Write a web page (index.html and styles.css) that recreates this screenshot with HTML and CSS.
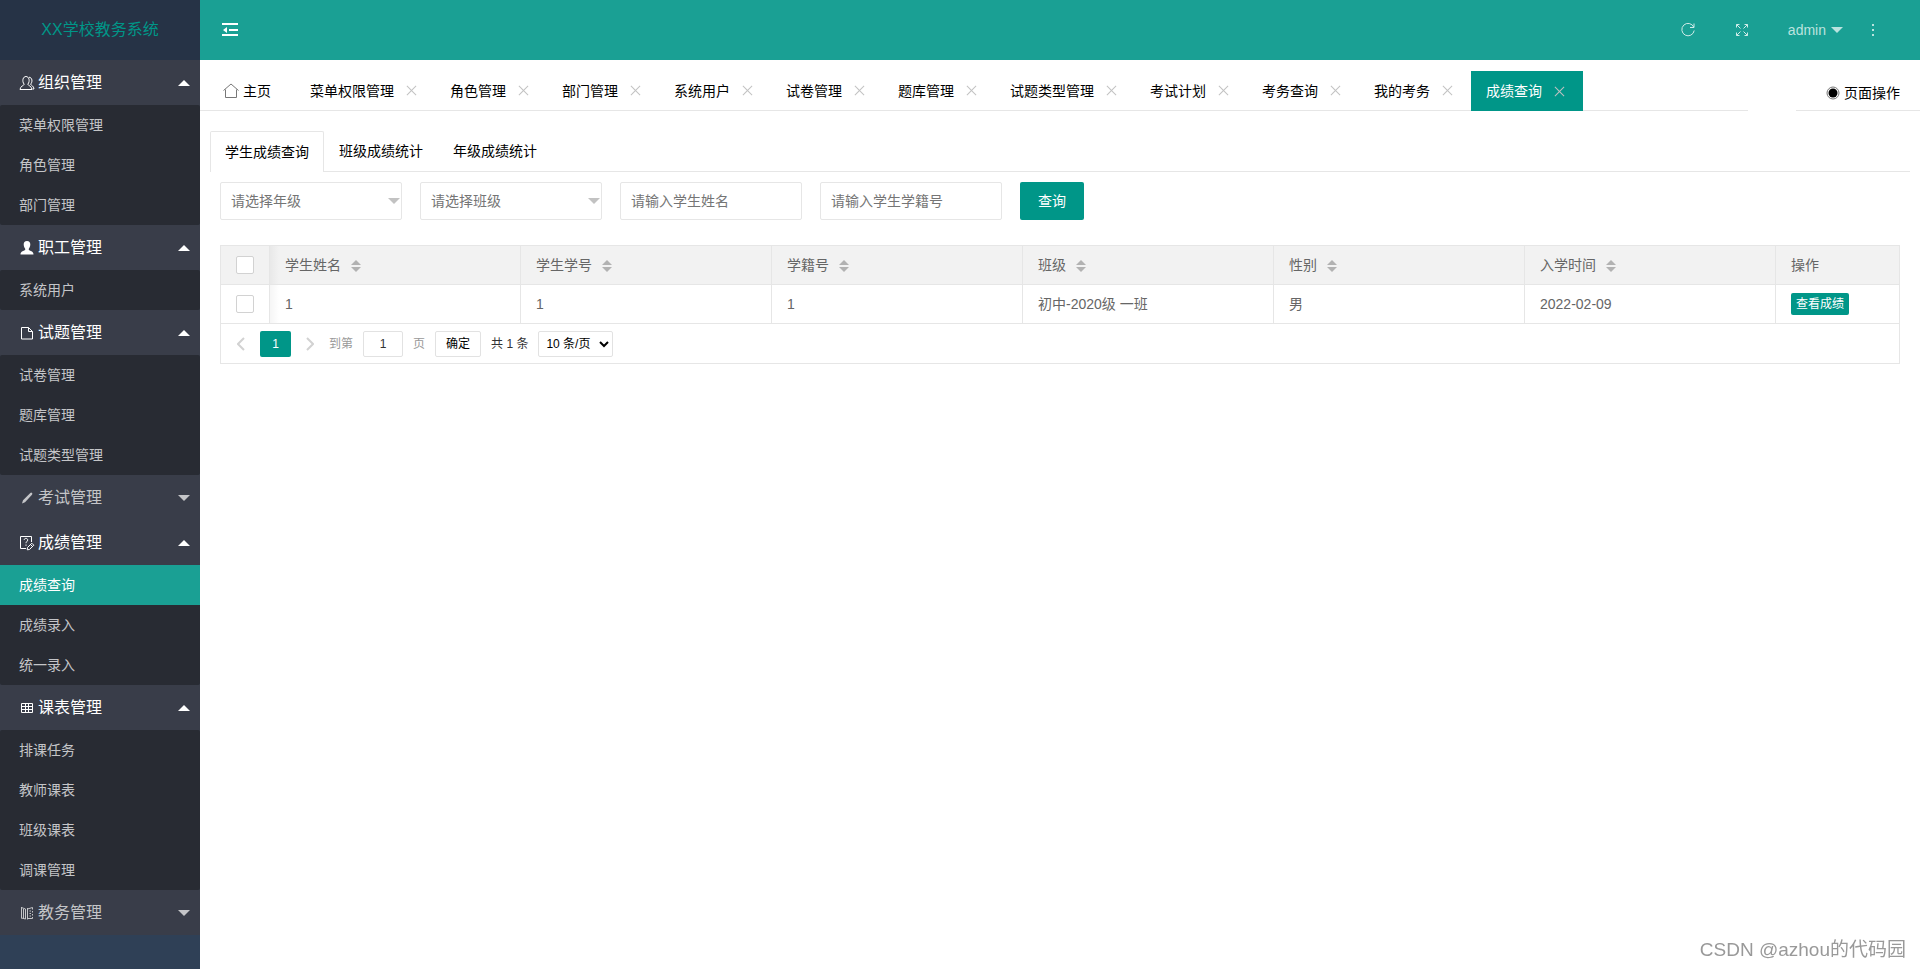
FILE: index.html
```html
<!DOCTYPE html>
<html lang="zh-CN">
<head>
<meta charset="utf-8">
<title>XX学校教务系统</title>
<link rel="stylesheet" href="styles.css">
</head>
<body>
<div class="app">
  <aside class="sidebar">
    <div class="logo">XX学校教务系统</div>
    <nav class="menu">
      <section class="group open">
        <button class="group-title" type="button"><svg class="icon" viewBox="0 0 16 16"><path d="M5.2 9.2C3.8 7.800 3.700 5.500 4 4.200 4.400 2.400 5.700 1.500 7 1.500s2.600.9 3 2.700c.3 1.300.2 3.600-1.200 5 .3 1.700 3.900 1.600 4.200 5.300H1c.3-3.700 3.900-3.600 4.200-5.300zM10 2.200c1.800.1 2.700 1.500 2.900 2.800.2 1.600-.2 2.900-1.300 4.200.4 1.300 3.200 1.600 3.400 4.800h-1.500"/></svg>组织管理<i class="caret"></i></button>
        <div class="items"><a href="#">菜单权限管理</a><a href="#">角色管理</a><a href="#">部门管理</a></div>
      </section>
      <section class="group open">
        <button class="group-title" type="button"><svg class="icon solid" viewBox="0 0 16 16"><path d="M8 1c2.300 0 3.400 1.600 3.300 3.500-.1 2-.8 3.500-1.500 4.300v1.300c1 .9 4.700 1.200 4.700 4.400h-13c0-3.200 3.700-3.500 4.700-4.400V8.800C5.500 8 4.800 6.500 4.700 4.500 4.600 2.600 5.700 1 8 1z"/></svg>职工管理<i class="caret"></i></button>
        <div class="items"><a href="#">系统用户</a></div>
      </section>
      <section class="group open">
        <button class="group-title" type="button"><svg class="icon" viewBox="0 0 16 16"><path d="M2.500 2.500h7l4 4v7.500h-11zM9.500 2.500v4h4"/></svg>试题管理<i class="caret"></i></button>
        <div class="items"><a href="#">试卷管理</a><a href="#">题库管理</a><a href="#">试题类型管理</a></div>
      </section>
      <section class="group">
        <button class="group-title" type="button"><svg class="icon solid" viewBox="0 0 16 16"><path d="M3 13.500l1-3.300L11.300 3q1-.8 1.700 0 .8.800 0 1.700L6 12.300z"/></svg>考试管理<i class="caret"></i></button>
      </section>
      <section class="group open">
        <button class="group-title" type="button"><svg class="icon" viewBox="0 0 16 16"><path d="M7 13.500H1.500v-12h11V7M5.200 5c0-2.200 3.500-2.200 3.500 0C8.700 6.500 7 6.500 7 8.200M7 9.500v1.300M8.500 12.500l4.300-4.300 2 2-4.300 4.300-2.300.3zM11.500 9.500l2 2"/></svg>成绩管理<i class="caret"></i></button>
        <div class="items"><a href="#" class="current">成绩查询</a><a href="#">成绩录入</a><a href="#">统一录入</a></div>
      </section>
      <section class="group open">
        <button class="group-title" type="button"><svg class="icon" viewBox="0 0 16 16"><path d="M2.500 3.500h11v9h-11zM2.500 6.500h11M2.500 9.500h11M6.500 3.500v9M9.500 3.500v9"/></svg>课表管理<i class="caret"></i></button>
        <div class="items"><a href="#">排课任务</a><a href="#">教师课表</a><a href="#">班级课表</a><a href="#">调课管理</a></div>
      </section>
      <section class="group">
        <button class="group-title" type="button"><svg class="icon" viewBox="0 0 16 16"><path d="M2.500 2v11.500M2.500 2.500l4 1.500v10l-4-1M4.500 4v9M8.500 3v11.500M8.500 4l5-1.500M8.500 13.500h5M13.500 2.500v2M13.500 6v1.500M13.500 9v1.500M13.500 12v1.500M10.500 6h1.500M10.500 8.500h1.500M10.500 11h1.500"/></svg>教务管理<i class="caret"></i></button>
      </section>
    </nav>
  </aside>

  <div class="main">
    <header class="topbar">
      <button class="bare" type="button" aria-label="收起菜单"><svg class="fold" viewBox="0 0 16 16"><path d="M0 1h16v2H0zM7 7h9v2H7zM0 12h16v2H0zM5 5v6L1 8z"/></svg></button>
      <div class="tools">
        <button class="bare" type="button" aria-label="刷新"><svg class="icon bold" viewBox="0 0 16 16"><path d="M13.700 5A6.200 6.200 0 1 0 14.200 8.500M14 1.500v4h-4"/></svg></button>
        <button class="bare" type="button" aria-label="全屏"><svg class="icon bold" viewBox="0 0 16 16"><path d="M2.500 5.500v-3h3M2.500 2.500l4 4M10.500 2.500h3v3M13.500 2.500l-4 4M2.500 10.500v3h3M2.500 13.500l4-4M10.500 13.500h3v-3M13.500 13.500l-4-4"/></svg></button>
        <div class="user">
          <button class="bare account" type="button">admin<i class="caret"></i></button>
          <button class="bare" type="button" aria-label="更多"><svg class="icon solid" viewBox="0 0 16 16"><path d="M7 2h2v2H7zM7 7h2v2H7zM7 12h2v2H7z"/></svg></button>
        </div>
      </div>
    </header>

    <div class="tabbar">
      <div class="tabs">
        <div class="tab home"><svg class="icon" viewBox="0 0 16 16"><path d="M.5 7.500L8 1l7.500 6.500M2.500 6.500v8h11v-8"/></svg>主页</div>
        <div class="tab">菜单权限管理<button class="close" type="button" aria-label="关闭"></button></div>
        <div class="tab">角色管理<button class="close" type="button" aria-label="关闭"></button></div>
        <div class="tab">部门管理<button class="close" type="button" aria-label="关闭"></button></div>
        <div class="tab">系统用户<button class="close" type="button" aria-label="关闭"></button></div>
        <div class="tab">试卷管理<button class="close" type="button" aria-label="关闭"></button></div>
        <div class="tab">题库管理<button class="close" type="button" aria-label="关闭"></button></div>
        <div class="tab">试题类型管理<button class="close" type="button" aria-label="关闭"></button></div>
        <div class="tab">考试计划<button class="close" type="button" aria-label="关闭"></button></div>
        <div class="tab">考务查询<button class="close" type="button" aria-label="关闭"></button></div>
        <div class="tab">我的考务<button class="close" type="button" aria-label="关闭"></button></div>
        <div class="tab active">成绩查询<button class="close" type="button" aria-label="关闭"></button></div>
      </div>
      <button class="page-ops" type="button"><svg class="dot" viewBox="0 0 14 14"><circle class="ring" cx="7" cy="7" r="6"/><circle cx="7" cy="7" r="4.500"/></svg>页面操作</button>
    </div>

    <main class="content">
      <div class="subtabs">
        <button class="subtab active" type="button">学生成绩查询</button>
        <button class="subtab" type="button">班级成绩统计</button>
        <button class="subtab" type="button">年级成绩统计</button>
      </div>
      <div class="panel">
        <form class="filters">
          <div class="pick"><select class="field" aria-label="年级"><option>请选择年级</option></select></div>
          <div class="pick"><select class="field" aria-label="班级"><option>请选择班级</option></select></div>
          <input class="field" type="text" aria-label="学生姓名" placeholder="请输入学生姓名">
          <input class="field" type="text" aria-label="学生学籍号" placeholder="请输入学生学籍号">
          <button class="search" type="button">查询</button>
        </form>
        <div class="grid">
          <table>
            <colgroup><col class="c-check"><col><col><col><col><col><col><col class="c-ops"></colgroup>
            <thead>
              <tr>
                <th class="check"><input type="checkbox" aria-label="全选"></th>
                <th>学生姓名<i class="sort"></i></th>
                <th>学生学号<i class="sort"></i></th>
                <th>学籍号<i class="sort"></i></th>
                <th>班级<i class="sort"></i></th>
                <th>性别<i class="sort"></i></th>
                <th>入学时间<i class="sort"></i></th>
                <th>操作</th>
              </tr>
            </thead>
            <tbody>
              <tr>
                <td class="check"><input type="checkbox" aria-label="选择"></td>
                <td>1</td><td>1</td><td>1</td><td>初中-2020级 一班</td><td>男</td><td>2022-02-09</td>
                <td><button class="view" type="button">查看成绩</button></td>
              </tr>
            </tbody>
          </table>
          <div class="pager">
            <button class="arrow" type="button" aria-label="上一页"><svg viewBox="0 0 8 14"><path d="M7 1L1 7l6 6"/></svg></button>
            <span class="page">1</span>
            <button class="arrow" type="button" aria-label="下一页"><svg viewBox="0 0 8 14"><path d="M1 1l6 6-6 6"/></svg></button>
            <label class="jump">到第<input type="text" value="1">页</label>
            <button class="ok" type="button">确定</button>
            <span class="total">共 1 条</span>
            <select class="size" aria-label="每页条数"><option>10 条/页</option></select>
          </div>
        </div>
      </div>
    </main>
  </div>
</div>
<div class="watermark">CSDN @azhou的代码园</div>
</body>
</html>
```
FILE: styles.css
```css
* { box-sizing: border-box; }

body {
  margin: 0;
  background: #fff;
  color: #000;
  font: 14px/24px "Liberation Sans", "Noto Sans CJK SC", sans-serif;
}

button, input, select { font: inherit; color: inherit; margin: 0; }
button { cursor: pointer; }
a { color: inherit; text-decoration: none; }

.app { display: flex; min-height: 100vh; }

.icon {
  flex: none;
  width: 16px;
  height: 16px;
  fill: none;
  stroke: currentColor;
}
.icon.solid { fill: currentColor; stroke: none; }
.icon.bold { stroke: #d0ece9; }

.caret {
  border: 6px solid transparent;
  border-top-color: currentColor;
  border-bottom-width: 0;
}

/* Sidebar */
.sidebar { flex: none; width: 200px; background: #2f4056; color: #c4c5c8; }
.logo {
  height: 60px;
  line-height: 60px;
  background: #263346;
  color: #009688;
  font-size: 16px;
  text-align: center;
}
.group { background: #393d49; }
.group-title {
  display: flex;
  align-items: center;
  gap: 3px;
  width: 100%;
  height: 45px;
  padding: 0 10px 0 19px;
  border: 0;
  background: none;
  font-size: 16px;
}
.group-title .caret { margin-left: auto; }
.group.open .group-title { color: #fff; }
.group.open .caret { border-width: 0 6px 6px; border-color: transparent transparent currentColor; }
.items { background: #282b33; border-radius: 2px; }
.items a { display: block; line-height: 40px; padding-left: 19px; }
.items .current { background: #1aa094; color: #fff; }

/* Top bar */
.main { flex: 1; min-width: 0; }
.topbar {
  display: flex;
  align-items: center;
  justify-content: space-between;
  height: 60px;
  padding: 0 39px 0 22px;
  background: #1aa094;
  color: #bae3df;
}
.bare { display: flex; align-items: center; padding: 0; border: 0; background: none; }
.fold { width: 16px; height: 16px; fill: #fff; }
.tools { display: flex; align-items: center; gap: 38px; }
.user { display: flex; align-items: center; gap: 22px; }
.account { gap: 5px; }

/* Page tabs */
.tabbar { display: flex; gap: 48px; padding: 11px 0 0; }
.tabs { display: flex; flex: 1; padding-left: 8px; border-bottom: 1px solid #e6e6e6; }
.tab { display: flex; align-items: center; height: 39px; padding: 0 15px; white-space: nowrap; }
.tab.home { gap: 4px; padding-right: 24px; }
.tab.home .icon { stroke: #777; }
.tab.active { height: 40px; margin-bottom: -1px; background: #009688; color: #fff; }
.close {
  display: grid;
  place-items: center;
  width: 18px;
  height: 18px;
  margin-left: 8px;
  padding: 0;
  border: 0;
  background: none;
  color: #c2c2c2;
}
.close::before, .close::after {
  content: "";
  grid-area: 1 / 1;
  width: 13px;
  height: 1px;
  background: currentColor;
  transform: rotate(45deg);
}
.close::after { transform: rotate(-45deg); }
.page-ops {
  display: flex;
  align-items: center;
  gap: 4px;
  width: 124px;
  padding: 4px 0 0 30px;
  border: 0;
  border-bottom: 1px solid #e6e6e6;
  background: none;
}
.dot { width: 14px; height: 14px; }
.ring { fill: none; stroke: #777; }

/* Content */
.content { padding: 20px 10px; }
.subtabs { display: flex; border-bottom: 1px solid #e6e6e6; }
.subtab { height: 40px; padding: 0 15px; border: 0; background: none; }
.subtab.active {
  height: 41px;
  margin-bottom: -1px;
  padding: 0 14px 1px;
  border: 1px solid #e6e6e6;
  border-bottom: 0;
  border-radius: 2px 2px 0 0;
  background: #fff;
}
.panel { padding: 10px; }
.filters { display: flex; gap: 18px; margin-bottom: 25px; }
.field {
  width: 182px;
  height: 38px;
  padding: 0 10px;
  border: 1px solid #e6e6e6;
  border-radius: 2px;
  background: #fff;
  color: #757575;
  appearance: none;
}
.field::placeholder { color: #757575; }
.pick { position: relative; }
.pick::after {
  content: "";
  position: absolute;
  top: 16px;
  right: 2px;
  border: 6px solid transparent;
  border-top-color: #c2c2c2;
  border-bottom-width: 0;
}
.search {
  height: 38px;
  padding: 0 18px;
  border: 0;
  border-radius: 2px;
  background: #009688;
  color: #fff;
}

/* Results */
.grid { border: 1px solid #e6e6e6; color: #666; }
table { width: 100%; table-layout: fixed; border-collapse: separate; border-spacing: 0; }
.c-check { width: 49px; }
.c-ops { width: 123px; }
th, td {
  height: 39px;
  padding: 0 15px;
  border: 0 solid #e6e6e6;
  border-width: 0 1px 1px 0;
  text-align: left;
  font-weight: 400;
}
th:last-child, td:last-child { border-right: 0; }
thead { background: #f2f2f2; }
.check + th, .check + td { background: linear-gradient(to right, rgba(0, 0, 0, .04), transparent 9px); }
.check input {
  display: block;
  width: 18px;
  height: 18px;
  border: 1px solid #d2d2d2;
  border-radius: 2px;
  background: #fff;
  appearance: none;
}
.sort {
  display: inline-grid;
  gap: 2px;
  margin-left: 10px;
  vertical-align: middle;
}
.sort::before, .sort::after {
  content: "";
  border: 5px solid transparent;
  border-top-width: 0;
  border-bottom-color: #b2b2b2;
}
.sort::after { border-width: 5px 5px 0; border-color: #b2b2b2 transparent transparent; }
.view {
  display: block;
  height: 22px;
  padding: 0 5px;
  border: 0;
  border-radius: 2px;
  background: #009688;
  color: #fff;
  font-size: 12px;
  line-height: 22px;
}

.pager { display: flex; align-items: center; height: 39px; padding-left: 16px; font-size: 12px; }
.arrow { display: flex; padding: 0; border: 0; background: none; }
.arrow svg { width: 8px; height: 14px; fill: none; stroke: #d2d2d2; stroke-width: 2px; }
.page {
  width: 31px;
  margin: 0 15px;
  border-radius: 2px;
  background: #009688;
  color: #fff;
  line-height: 26px;
  text-align: center;
}
.jump { display: flex; align-items: center; gap: 10px; margin-left: 15px; color: #999; }
.jump input {
  width: 40px;
  height: 26px;
  padding: 0;
  border: 1px solid #e2e2e2;
  border-radius: 2px;
  color: #333;
  text-align: center;
}
.ok {
  height: 26px;
  margin: 0 10px;
  padding: 0 10px;
  border: 1px solid #e2e2e2;
  border-radius: 2px;
  background: #fff;
  color: #000;
}
.total { color: #333; }
.size {
  width: 75px;
  height: 26px;
  margin-left: 10px;
  padding: 0 3px;
  border: 1px solid #e2e2e2;
  border-radius: 2px;
  background: #fff;
  color: #000;
}

.watermark {
  position: fixed;
  right: 14px;
  bottom: 7px;
  color: #999;
  font-size: 19px;
}
```
